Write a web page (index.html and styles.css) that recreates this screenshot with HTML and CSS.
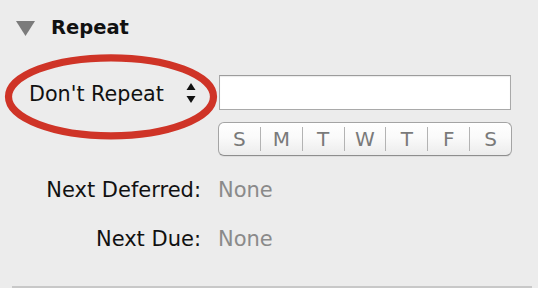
FILE: index.html
```html
<!DOCTYPE html>
<html>
<head>
<meta charset="utf-8">
<link rel="stylesheet" href="styles.css">
</head>
<body>
<div class="panel">
  <div class="header">
    <svg class="disclosure" width="19" height="16" viewBox="0 0 19 16"><polygon points="0,0 19,0 9.5,15" fill="#7b7b7b"/></svg>
    <span class="title">Repeat</span>
  </div>
  <div class="form">
    <div class="popup">
      <span class="popup-text">Don't Repeat</span>
      <svg class="stepper" width="10" height="20" viewBox="0 0 10 20"><polygon points="5,0 9.5,7 0.5,7" fill="#111"/><polygon points="0.5,13 9.5,13 5,20" fill="#111"/></svg>
    </div>
    <div class="field"></div>
    <div class="segmented">
      <span class="seg">S</span><span class="seg">M</span><span class="seg">T</span><span class="seg">W</span><span class="seg">T</span><span class="seg">F</span><span class="seg">S</span>
    </div>
    <div class="label first">Next Deferred:</div>
    <div class="value first">None</div>
    <div class="label">Next Due:</div>
    <div class="value">None</div>
  </div>
  <div class="rule"></div>
  <svg class="annotation" width="230" height="150" viewBox="0 0 230 150"><ellipse cx="111" cy="96.8" rx="102.5" ry="39" fill="none" stroke="#cf3427" stroke-width="7.2"/></svg>
</div>
</body>
</html>
```
FILE: styles.css
```css
html, body {
  margin: 0;
  padding: 0;
  background: #ececec;
}
body {
  width: 538px;
  height: 288px;
  overflow: hidden;
  font-family: "DejaVu Sans", "Liberation Sans", sans-serif;
  color: #111;
}
.panel {
  position: relative;
  padding-top: 14px;
}
.header {
  display: flex;
  align-items: center;
  height: 28px;
  padding-left: 16px;
}
.disclosure {
  display: block;
  margin-top: 2px;
}
.title {
  margin-left: 16px;
  font-weight: bold;
  font-size: 19.5px;
  line-height: 28px;
}
.form {
  display: grid;
  grid-template-columns: 201px 294px;
  column-gap: 17px;
  margin-top: 33px;
}
.popup {
  display: flex;
  align-items: center;
  padding-left: 29px;
  height: 35px;
  font-size: 20.7px;
  padding-top: 2px;
  box-sizing: border-box;
}
.popup-text {
  white-space: nowrap;
}
.stepper {
  display: block;
  margin-left: auto;
  margin-right: 5px;
  margin-top: -2px;
}
.field {
  height: 35px;
  width: 292px;
  margin-left: 1px;
  box-sizing: border-box;
  background: #fff;
  border: 1px solid #a9a9a9;
  border-top-color: #9c9c9c;
  box-shadow: inset 0 1px 1px rgba(0,0,0,0.08);
}
.segmented {
  grid-column: 2;
  margin-top: 12px;
  height: 34px;
  box-sizing: border-box;
  display: flex;
  align-items: center;
  border: 1px solid #a4a4a4;
  border-bottom-color: #8e8e8e;
  border-radius: 6px;
  background: linear-gradient(#ffffff, #fafafa 45%, #ececec);
  box-shadow: 0 1px 0 rgba(0,0,0,0.06);
}
.seg {
  flex: 1;
  text-align: center;
  font-size: 20px;
  line-height: 24px;
  color: #7a7a7a;
  border-left: 1px solid #b3b3b3;
}
.seg:first-child {
  border-left: none;
}
.label, .value {
  font-size: 21px;
  line-height: 28px;
  margin-top: 21px;
  white-space: nowrap;
}
.label.first, .value.first {
  margin-top: 20px;
}
.label {
  text-align: right;
  color: #111;
}
.value {
  color: #8a8a8a;
}
.rule {
  margin: 33px 6px 0 12px;
  height: 2px;
  background: #c8c8c8;
}
.annotation {
  position: absolute;
  left: 0;
  top: 0;
  pointer-events: none;
}
```
